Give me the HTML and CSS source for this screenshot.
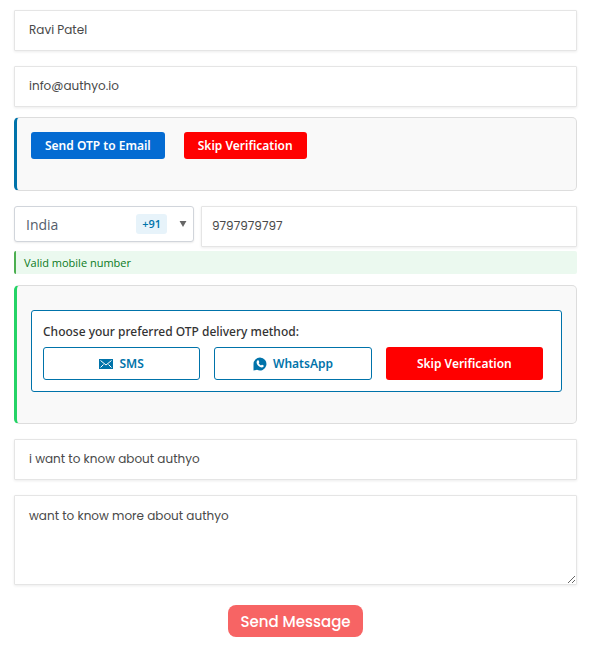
FILE: index.html
```html
<!DOCTYPE html>
<html lang="en">
<head>
  <meta charset="UTF-8">
  <meta name="viewport" content="width=device-width, initial-scale=1.0">
  <title>Contact Form</title>
  <link rel="stylesheet" href="styles.css">
</head>
<body>
  <form class="contact-form">
    <input class="field" type="text" aria-label="Name" value="Ravi Patel">
    <input class="field" type="email" aria-label="Email" value="info@authyo.io">

    <!-- Email verification -->
    <div class="verify verify-email">
      <button type="button" class="btn btn-send">Send OTP to Email</button>
      <button type="button" class="btn btn-skip">Skip Verification</button>
    </div>

    <!-- Mobile number -->
    <div class="phone-row">
      <div class="country">
        <select class="country-select" aria-label="Country">
          <option>India</option>
        </select>
        <span class="dial-code">+91</span>
        <svg class="arrow" viewBox="0 0 8 7" aria-hidden="true"><path d="M0 0h8L4 7z"/></svg>
      </div>
      <input class="field phone" type="tel" aria-label="Mobile number" value="9797979797">
    </div>
    <div class="valid-message">Valid mobile number</div>

    <!-- Mobile verification -->
    <div class="verify verify-mobile">
      <div class="methods">
        <p class="methods-title">Choose your preferred OTP delivery method:</p>
        <div class="methods-list">
          <button type="button" class="btn btn-method">
            <svg class="icon" viewBox="0 0 14 14" aria-hidden="true">
              <rect x="0" y="2" width="14" height="10" fill="currentColor"/>
              <path d="M1.500 3.500L7 8l5.500-4.500M1.500 10.500L4.500 7.500M12.500 10.500L9.500 7.500" fill="none" stroke="#fff" stroke-width="1"/>
            </svg>
            SMS
          </button>
          <button type="button" class="btn btn-method">
            <svg class="icon" viewBox="0 0 14 14" aria-hidden="true">
              <path d="M7 .5a6.500 6.500 0 1 1-3 12.300L.5 13.500V7A6.500 6.500 0 0 1 7 .5z" fill="currentColor"/>
              <path d="M4.700 3.300c.4-.2.800-.1.900.2l.7 1.500c.1.400-.5.900-.6 1.200.5 1 1.300 1.700 2.300 2.200.4-.2.800-.9 1.200-.7l1.400.7c.4.2.1 1-.2 1.400-.9.900-2.300.8-3.800-.1C5.200 8.800 4.100 7.500 3.700 6.200c-.3-1.200.1-2.300 1-2.900z" fill="#fff"/>
            </svg>
            WhatsApp
          </button>
          <button type="button" class="btn btn-skip">Skip Verification</button>
        </div>
      </div>
    </div>

    <input class="field" type="text" aria-label="Subject" value="i want to know about authyo">
    <textarea class="field message" aria-label="Message">want to know more about authyo</textarea>

    <button type="submit" class="submit">Send Message</button>
  </form>
</body>
</html>
```
FILE: styles.css
```css
* {
  box-sizing: border-box;
}

body {
  margin: 0;
  background: #fff;
  font-family: "Open Sans", "Noto Sans", sans-serif;
}

.contact-form {
  display: flex;
  flex-direction: column;
  padding: 10px 17px 13px 14px;
}

.field {
  width: 100%;
  height: 41px;
  margin: 0 0 15px;
  padding: 0 14px 2px;
  border: 1px solid #e5e5e5;
  border-radius: 1px;
  background: #fff;
  box-shadow: 0 1px 3px rgba(0, 0, 0, 0.08);
  color: #494949;
  font-family: Poppins, Inter, sans-serif;
  font-size: 12px;
  outline: none;
}

.verify {
  margin: -5px 0 15px;
  border: 1px solid #ddd;
  border-left-width: 3px;
  border-radius: 5px;
  background: #f9f9f9;
}

.verify-email {
  display: flex;
  gap: 19px;
  padding: 14px 14px 31px;
  border-left-color: #0073aa;
}

.verify-mobile {
  margin-top: 11px;
  padding: 24px 14px 31px;
  border-left-color: #25d366;
}

.btn {
  height: 27px;
  padding: 0 14px;
  border: 0;
  border-radius: 3px;
  color: #fff;
  font-family: "Noto Sans", sans-serif;
  font-size: 12px;
  font-weight: 600;
  cursor: pointer;
}

.btn-send {
  background: #046bd2;
}

.btn-skip {
  background: #f00;
}

.phone-row {
  display: flex;
  align-items: flex-start;
  gap: 7px;
}

.country {
  position: relative;
  flex: 0 0 180px;
}

.country-select {
  display: block;
  width: 100%;
  height: 36px;
  padding: 0 11px;
  appearance: none;
  border: 1px solid #d1d5db;
  border-radius: 3px;
  background: #fff;
  box-shadow: 0 1px 2px rgba(0, 0, 0, 0.08);
  color: #555d6b;
  font-family: "Open Sans", "Noto Sans", sans-serif;
  font-size: 14px;
}

.dial-code {
  position: absolute;
  top: 8px;
  right: 27px;
  padding: 0 6px;
  border-radius: 3px;
  background: #e7f3fa;
  color: #0073aa;
  font-size: 11px;
  font-weight: 600;
  line-height: 20px;
  pointer-events: none;
}

.arrow {
  position: absolute;
  top: 15px;
  right: 7px;
  width: 8px;
  height: 6px;
  fill: #666;
  pointer-events: none;
}

.phone {
  flex: 1;
  min-width: 0;
  margin-bottom: 4px;
  padding: 0 10px 2px;
}

.valid-message {
  padding: 0 8px;
  border-left: 2px solid #4caf50;
  border-radius: 2px;
  background: #ebf9ef;
  color: #0a7a1c;
  font-size: 11px;
  line-height: 23px;
}

.methods {
  padding: 12px 18px 11px 11px;
  border: 1px solid #0073aa;
  border-radius: 3px;
  background: #fff;
}

.methods-title {
  margin: 0 0 6px;
  color: #333;
  font-family: "Noto Sans", sans-serif;
  font-size: 12px;
  font-weight: 500;
  line-height: 18px;
}

.methods-list {
  display: grid;
  grid-template-columns: repeat(3, 1fr);
  gap: 14px;
}

.methods-list .btn {
  height: 33px;
}

.btn-method {
  display: flex;
  align-items: center;
  justify-content: center;
  gap: 6px;
  border: 1px solid #0073aa;
  background: #fff;
  color: #0073aa;
}

.icon {
  width: 14px;
  height: 14px;
}

.message {
  height: 90px;
  margin-bottom: 20px;
  padding: 10px 14px;
  line-height: 20px;
  resize: vertical;
}

.submit {
  align-self: center;
  height: 32px;
  padding: 0 12px;
  border: 0;
  border-radius: 8px;
  background: #f76464;
  color: #fff;
  font-family: Poppins, Inter, sans-serif;
  font-size: 15px;
  font-weight: 500;
  cursor: pointer;
}
```
